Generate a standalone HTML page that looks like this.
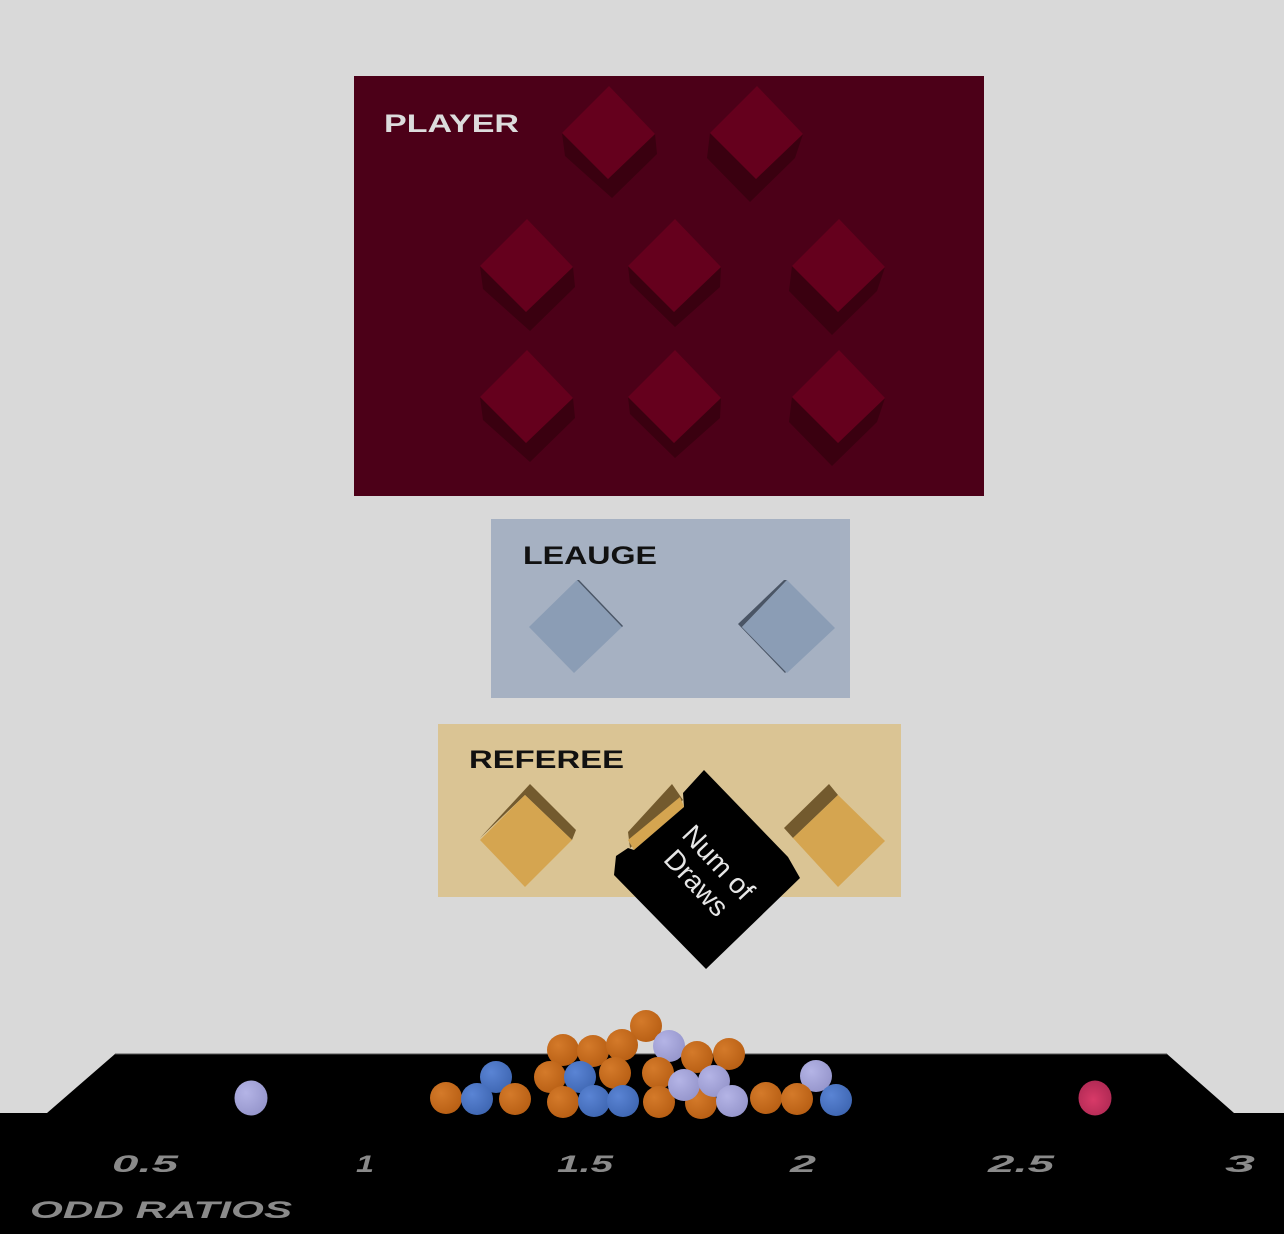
<!DOCTYPE html>
<html><head><meta charset="utf-8"><style>
html,body{margin:0;padding:0;background:#d9d9d9;}
svg{display:block;}
text{font-family:"Liberation Sans",sans-serif;}
</style></head><body>
<svg width="1284" height="1234" viewBox="0 0 1284 1234" xmlns="http://www.w3.org/2000/svg">
<defs>
<g id="pd">
<polygon points="-46,1 -44,18 1,62 46,22 47,2 0,47" fill="#3a0010"/>
<polygon points="1,-46 47,2 0,47 -46,1" fill="#65001d"/>
</g>
<g id="pdl">
<polygon points="-46,1 -49,26 -6,70 39,26 47,2 0,47" fill="#3a0010"/>
<polygon points="1,-46 47,2 0,47 -46,1" fill="#65001d"/>
</g>
<g id="pdr">
<polygon points="-46,1 -43,24 4,66 49,22 47,2 0,47" fill="#3a0010"/>
<polygon points="1,-46 47,2 0,47 -46,1" fill="#65001d"/>
</g>
<radialGradient id="go" cx="0.35" cy="0.35" r="0.7"><stop offset="0" stop-color="#d47a2a"/><stop offset="1" stop-color="#b85f14"/></radialGradient>
<radialGradient id="gb" cx="0.35" cy="0.35" r="0.7"><stop offset="0" stop-color="#5a84d4"/><stop offset="1" stop-color="#3f67b3"/></radialGradient>
<radialGradient id="gl" cx="0.35" cy="0.35" r="0.7"><stop offset="0" stop-color="#b4b4e6"/><stop offset="1" stop-color="#9696cc"/></radialGradient>
<radialGradient id="gp" cx="0.45" cy="0.55" r="0.7"><stop offset="0" stop-color="#d83a68"/><stop offset="1" stop-color="#a82650"/></radialGradient>
</defs>
<rect width="1284" height="1234" fill="#d9d9d9"/>
<!-- PLAYER -->
<rect x="354" y="76" width="630" height="420" fill="#4c0018"/>
<text x="384" y="132" font-size="25" font-weight="bold" fill="#dcdcdc" textLength="135" lengthAdjust="spacingAndGlyphs">PLAYER</text>
<use href="#pdr" transform="translate(608,132)"/>
<use href="#pdl" transform="translate(756,132)"/>
<use href="#pdr" transform="translate(526,265)"/>
<use href="#pd" transform="translate(674,265)"/>
<use href="#pdl" transform="translate(838,265)"/>
<use href="#pdr" transform="translate(526,396)"/>
<use href="#pd" transform="translate(674,396)"/>
<use href="#pdl" transform="translate(838,396)"/>
<!-- LEAUGE -->
<rect x="491" y="519" width="359" height="179" fill="#a6b1c2"/>
<text x="523" y="564" font-size="25" font-weight="bold" fill="#111" textLength="134" lengthAdjust="spacingAndGlyphs">LEAUGE</text>
<polygon points="577,580 623,626 574,673 529,627" fill="#8b9db5"/>
<polygon points="577,580 579,580 623,626 622,627" fill="#4a5565"/>
<polygon points="738,624 784,580 787,580 742,627 786,672 785,673" fill="#4a5565"/>
<polygon points="787,580 835,628 787,673 742,627" fill="#8b9db5"/>
<!-- REFEREE -->
<rect x="438" y="724" width="463" height="173" fill="#dac494"/>
<text x="469" y="768" font-size="25" font-weight="bold" fill="#111" textLength="155" lengthAdjust="spacingAndGlyphs">REFEREE</text>
<polygon points="480,838 530,784 576,830 572,840 525,795" fill="#735a2e"/>
<polygon points="525,795 572,840 525,887 480,840" fill="#d5a550"/>
<polygon points="784,828 829,784 838,795 793,838" fill="#735a2e"/>
<polygon points="838,795 885,841 838,887 793,838" fill="#d5a550"/>
<polygon points="628,832 672,784 683,800 630,848" fill="#735a2e"/>
<polygon points="628,840 680,797 684,807 634,850" fill="#d5a550"/>
<!-- black cube -->
<polygon points="704,770 788,857 800,878 706,969 614,875 616,856 628,848 634,850 684,807 683,793" fill="#000"/>
<g transform="translate(707,873) rotate(47)">
<text x="0" y="-6" font-size="28" fill="#e6e6e6" text-anchor="middle">Num of</text>
<text x="0" y="24" font-size="28" fill="#e6e6e6" text-anchor="middle">Draws</text>
</g>
<!-- floor -->
<polygon points="115,1054 1167,1054 1234,1113 1284,1113 1284,1234 0,1234 0,1113 47,1113" fill="#000"/>
<line x1="115" y1="1054" x2="1167" y2="1054" stroke="#555" stroke-width="1"/>
<g fill="#8a8a8a" font-size="24" font-style="italic" font-weight="bold">
<text x="112" y="1172" textLength="66" lengthAdjust="spacingAndGlyphs">0.5</text>
<text x="356" y="1172" textLength="18" lengthAdjust="spacingAndGlyphs">1</text>
<text x="557" y="1172" textLength="56" lengthAdjust="spacingAndGlyphs">1.5</text>
<text x="790" y="1172" textLength="26" lengthAdjust="spacingAndGlyphs">2</text>
<text x="988" y="1172" textLength="66" lengthAdjust="spacingAndGlyphs">2.5</text>
<text x="1225" y="1172" textLength="30" lengthAdjust="spacingAndGlyphs">3</text>
<text x="30" y="1218" textLength="262" lengthAdjust="spacingAndGlyphs">ODD RATIOS</text>
</g>
<!-- balls -->
<ellipse cx="251" cy="1098" rx="16.5" ry="17.5" fill="url(#gl)"/>
<ellipse cx="1095" cy="1098" rx="16.5" ry="17.5" fill="url(#gp)"/>
<g>
<circle cx="646" cy="1026" r="16" fill="url(#go)"/>
<circle cx="563" cy="1050" r="16" fill="url(#go)"/>
<circle cx="593" cy="1051" r="16" fill="url(#go)"/>
<circle cx="622" cy="1045" r="16" fill="url(#go)"/>
<circle cx="669" cy="1046" r="16" fill="url(#gl)"/>
<circle cx="697" cy="1057" r="16" fill="url(#go)"/>
<circle cx="729" cy="1054" r="16" fill="url(#go)"/>
<circle cx="496" cy="1077" r="16" fill="url(#gb)"/>
<circle cx="550" cy="1077" r="16" fill="url(#go)"/>
<circle cx="580" cy="1077" r="16" fill="url(#gb)"/>
<circle cx="615" cy="1073" r="16" fill="url(#go)"/>
<circle cx="658" cy="1073" r="16" fill="url(#go)"/>
<circle cx="816" cy="1076" r="16" fill="url(#gl)"/>
<circle cx="446" cy="1098" r="16" fill="url(#go)"/>
<circle cx="477" cy="1099" r="16" fill="url(#gb)"/>
<circle cx="515" cy="1099" r="16" fill="url(#go)"/>
<circle cx="563" cy="1102" r="16" fill="url(#go)"/>
<circle cx="594" cy="1101" r="16" fill="url(#gb)"/>
<circle cx="623" cy="1101" r="16" fill="url(#gb)"/>
<circle cx="659" cy="1102" r="16" fill="url(#go)"/>
<circle cx="701" cy="1103" r="16" fill="url(#go)"/>
<circle cx="684" cy="1085" r="16" fill="url(#gl)"/>
<circle cx="714" cy="1081" r="16" fill="url(#gl)"/>
<circle cx="732" cy="1101" r="16" fill="url(#gl)"/>
<circle cx="766" cy="1098" r="16" fill="url(#go)"/>
<circle cx="797" cy="1099" r="16" fill="url(#go)"/>
<circle cx="836" cy="1100" r="16" fill="url(#gb)"/>
</g>
</svg>
</body></html>
